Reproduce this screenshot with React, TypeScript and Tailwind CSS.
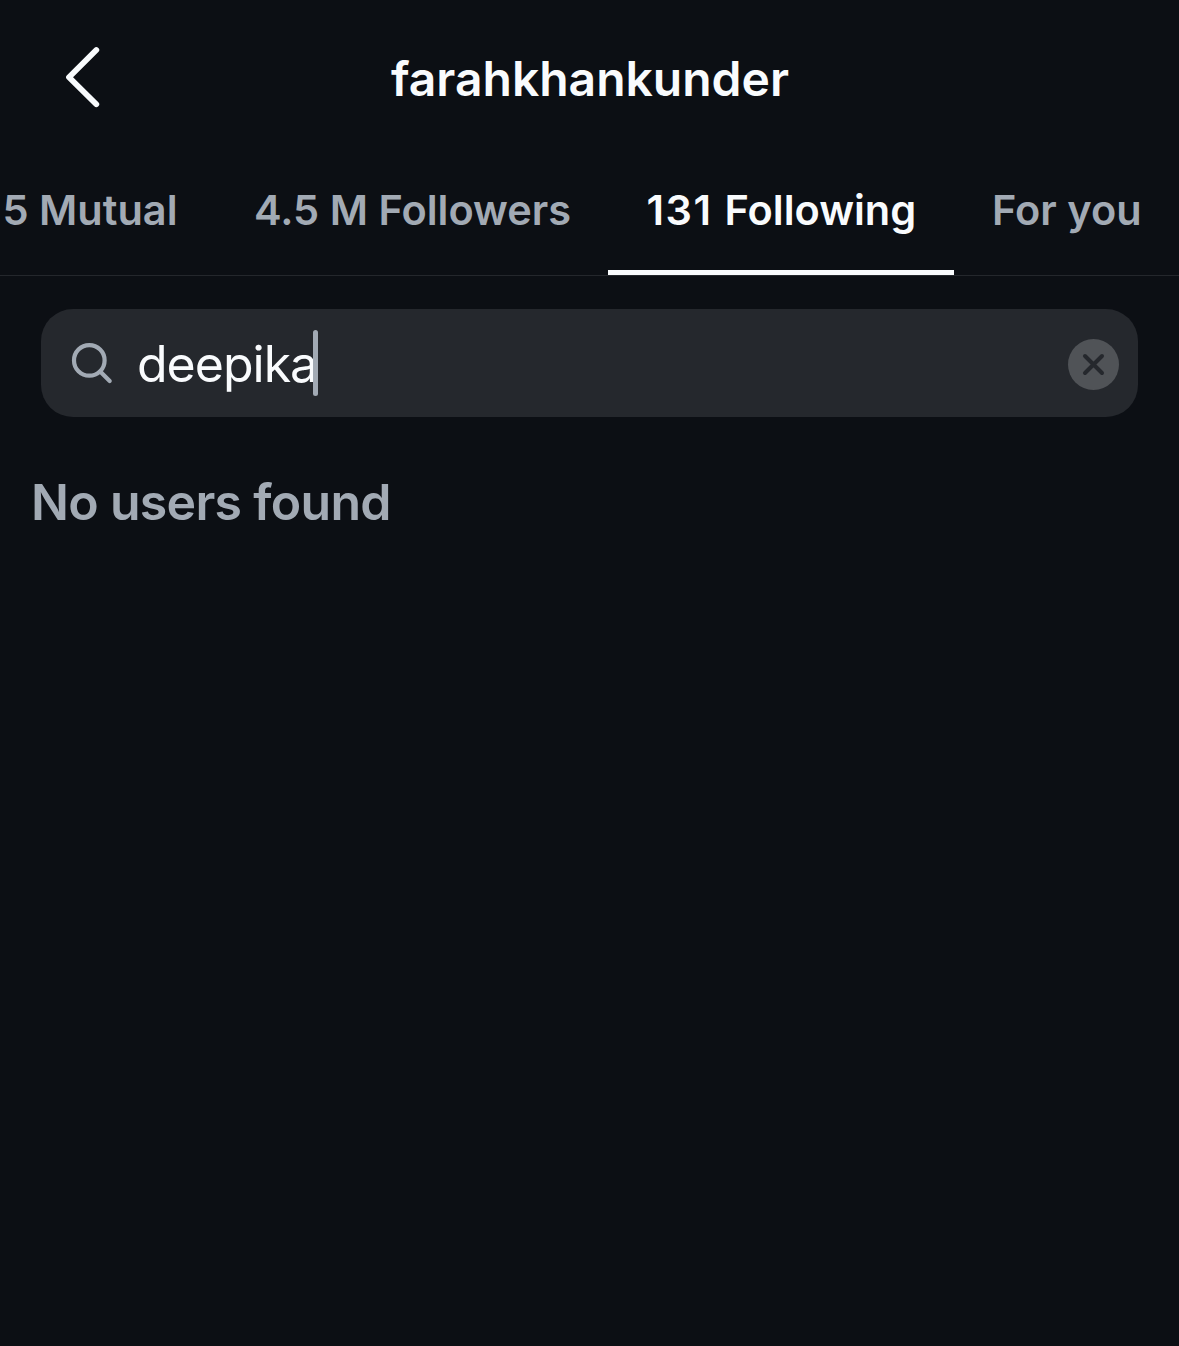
import React, { useState } from 'react';

const tabs = [
  { count: '5', name: 'Mutual', tabClass: 'w-[212px] pl-[2.5px]', countClass: '' },
  { count: '4.5 M', name: 'Followers', tabClass: 'w-[396px] pl-[42px]', countClass: '' },
  { count: '131', name: 'Following', tabClass: 'w-[346px] pl-[38.5px]', countClass: 'tracking-[1.5px]' },
  { count: '', name: 'For you', tabClass: 'w-[225px] pl-[38px]', countClass: '' },
];

const App: React.FC = () => {
  const [activeTab, setActiveTab] = useState('Following');
  const [query, setQuery] = useState('deepika');

  return (
    <div className="flex h-[1346px] w-[1179px] flex-col overflow-hidden bg-[#0c0f14] font-['Inter',sans-serif] text-[#f9fbfd]">
      <header className="grid h-[156px] grid-cols-[1fr_auto_1fr] items-center">
        <button aria-label="Back" className="justify-self-start pl-[60px]">
          <svg width="44" height="64" viewBox="0 0 44 64" fill="none" stroke="currentColor" strokeWidth="5.8" strokeLinecap="round" strokeLinejoin="round">
            <path d="M36.3 4 9 31.2 36.3 58.2" />
          </svg>
        </button>
        <h1 className="pt-[2px] pl-px text-[48px] leading-[60px] font-semibold">farahkhankunder</h1>
      </header>

      <nav className="flex h-[120px] border-b border-[#24272c]">
        {tabs.map((tab) => (
          <button
            key={tab.name}
            onClick={() => setActiveTab(tab.name)}
            className={`flex h-[119px] shrink-0 items-start border-b-5 pt-[28px] text-left text-[41.5px] leading-[52px] font-semibold whitespace-pre ${tab.tabClass} ${
              activeTab === tab.name ? 'border-[#f9fbfd] text-[#f9fbfd]' : 'border-transparent text-[#a2aab4]'
            }`}
          >
            {tab.count && <span className={tab.countClass}>{tab.count + ' '}</span>}
            <span>{tab.name}</span>
          </button>
        ))}
      </nav>

      <main>
        <div className="mx-[41px] mt-[33px] flex h-[108px] items-center rounded-[32px] bg-[#25282d] pr-[19px] pl-[30px]">
          <svg width="44" height="44" viewBox="0 0 44 44" fill="none" stroke="#a2aab4" strokeWidth="4.2" strokeLinecap="round">
            <circle cx="18.3" cy="19.4" r="15.3" />
            <path d="m29.2 30.4 9.5 9.5" />
          </svg>
          <div className="ml-[22px] flex flex-1 items-center">
            <span className="pt-[2px] text-[50px] leading-[66px] tracking-[-1px]">{query}</span>
            {query && <span className="-ml-[4.5px] h-[66px] w-[5.5px] rounded-full bg-[#a2aab4]" />}
          </div>
          <button aria-label="Clear search" onClick={() => setQuery('')} className="mt-[3px] flex size-[51px] items-center justify-center rounded-full bg-[#505357]">
            <svg width="25" height="25" viewBox="0 0 25 25" fill="none" stroke="#25282d" strokeWidth="4" strokeLinecap="round">
              <path d="m4 4 17 17M21 4 4 21" />
            </svg>
          </button>
        </div>
        <p className="mt-[53px] ml-[31px] text-[50px] leading-[64px] font-semibold tracking-[-0.7px] text-[#a2aab4]">No users found</p>
      </main>
    </div>
  );
};

export default App;
